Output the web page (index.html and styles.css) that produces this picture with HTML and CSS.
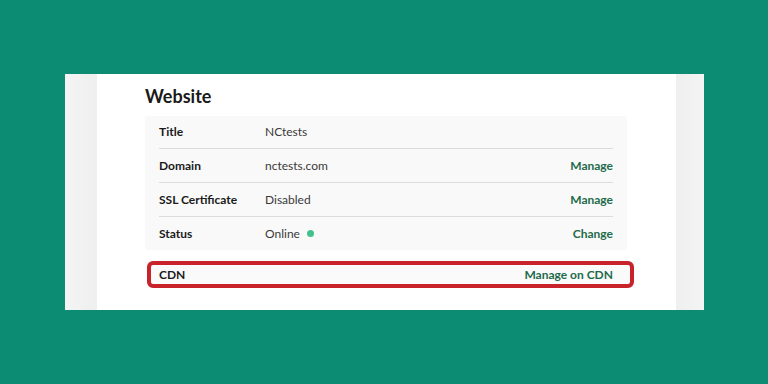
FILE: index.html
```html
<!DOCTYPE html>
<html lang="en">
<head>
    <meta charset="UTF-8">
    <meta name="viewport" content="width=device-width, initial-scale=1.0">
    <title>Website</title>
    <link rel="stylesheet" href="styles.css">
</head>
<body>
    <div class="frame">
        <div class="side side-left"></div>
        <div class="main">
            <h2>Website</h2>
            <div class="details">
                <div class="row">
                    <span class="label">Title</span>
                    <span class="value">NCtests</span>
                </div>
                <div class="row">
                    <span class="label">Domain</span>
                    <span class="value">nctests.com</span>
                    <a class="action" href="#">Manage</a>
                </div>
                <div class="row">
                    <span class="label">SSL Certificate</span>
                    <span class="value">Disabled</span>
                    <a class="action" href="#">Manage</a>
                </div>
                <div class="row">
                    <span class="label">Status</span>
                    <span class="value">Online <span class="dot"></span></span>
                    <a class="action" href="#">Change</a>
                </div>
            </div>
            <div class="cdn">
                <span class="label">CDN</span>
                <a class="action" href="#">Manage on CDN</a>
            </div>
        </div>
        <div class="side side-right"></div>
    </div>
</body>
</html>
```

FILE: styles.css
```css
body {
    margin: 0;
    background-color: #0b8c73;
    font-family: 'Lato', sans-serif;
    height: 384px;
    overflow: hidden;
}
.frame {
    display: flex;
    width: 639px;
    height: 236px;
    margin: 74px 0 0 65px;
    background-color: #fff;
}
.side-left {
    width: 32px;
    background: linear-gradient(to right, #f4f4f4, #efefef);
}
.side-right {
    width: 28px;
    background: linear-gradient(to right, #efefef, #f4f4f4);
}
.main {
    flex: 1;
    padding: 0 49px 0 48px;
}
h2 {
    margin: 11px 0 0;
    font-size: 18px;
    font-weight: 700;
    line-height: 22px;
    color: #1a1a1a;
    height: 31px;
}
.details {
    background-color: #f9f9f9;
    padding: 0 14px;
    border-radius: 3px;
}
.row {
    display: flex;
    align-items: center;
    height: 33px;
    border-top: 1px solid #dcdcdc;
    font-size: 12px;
}
.row:first-child {
    border-top: none;
    height: 31px;
    padding-bottom: 1px;
}
.label {
    width: 106px;
    font-weight: 700;
    color: #1a1a1a;
}
.value {
    flex: 1;
    color: #3a3a3a;
    display: flex;
    align-items: center;
}
.dot {
    display: inline-block;
    width: 7px;
    height: 7px;
    border-radius: 50%;
    background-color: #45c08d;
    margin-left: 7px;
}
.action {
    color: #1e6b4b;
    font-weight: 700;
    text-decoration: none;
    font-size: 12px;
}
.cdn {
    display: flex;
    justify-content: space-between;
    align-items: center;
    margin: 11px -7px 0 2px;
    height: 19px;
    padding: 0 17px 0 8px;
    border: 4px solid #c8232b;
    border-radius: 6px;
    background-color: #fafafa;
    font-size: 12px;
}
.cdn .label {
    width: auto;
}
```
